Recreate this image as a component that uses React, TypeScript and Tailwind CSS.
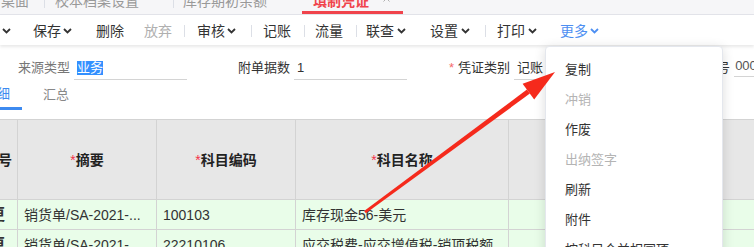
import { X } from 'lucide-react';

// small bold caret used after toolbar labels
function Chev({ className = '' }: { className?: string }) {
  return (
    <svg width="9" height="6" viewBox="0 0 9 6" className={`shrink-0 ${className}`}>
      <path d="M1 1l3.5 3.5L8 1" fill="none" stroke="currentColor" strokeWidth="1.8" />
    </svg>
  );
}

function Sep({ className = '' }: { className?: string }) {
  return <span className={`h-[12px] w-px shrink-0 bg-[#dcdfe6] ${className}`} />;
}

const MENU = [
  { label: '复制', disabled: false },
  { label: '冲销', disabled: true },
  { label: '作废', disabled: false },
  { label: '出纳签字', disabled: true },
  { label: '刷新', disabled: false },
  { label: '附件', disabled: false },
  { label: '按科目合并相同项', disabled: false },
];

export default function App() {
  return (
    <div className="relative h-[247px] w-[754px] overflow-hidden whitespace-nowrap bg-white font-['Liberation_Sans','Noto_Sans_CJK_SC',sans-serif] text-[#333]">
      {/* Page tabs (cut off at the top) */}
      <div className="h-[15px] overflow-hidden border-b border-[#e3e4ea] bg-[#f6f6f8] text-[14px] leading-[14px] text-[#999]">
        <div className="-mt-[6px] flex h-[20px] items-start">
          <span className="ml-[1px]">桌面</span>
          <Sep className="ml-[15px] h-[14px]" />
          <span className="ml-[10px]">校本档案设置</span>
          <Sep className="ml-[34px] h-[14px]" />
          <span className="ml-[9px]">库存期初余额</span>
          <div className="ml-[35px] flex h-[20px] w-[101px] items-start border-b-[3px] border-[#f0444c] pl-[11px]">
            <span className="font-bold text-[#f0444c]">填制凭证</span>
            <X size={11} strokeWidth={2} className="-mt-[1px] ml-[12px] text-[#aaa]" />
          </div>
        </div>
      </div>

      {/* Toolbar */}
      <div className="relative z-10 flex h-[30px] items-center bg-white pt-[2px] text-[14px] leading-[16px] shadow-[0_2px_3px_rgba(0,0,0,0.09)]">
        <Chev className="ml-[2px]" />
        <span className="ml-[22px]">保存</span>
        <Chev className="ml-[2px]" />
        <span className="ml-[24px]">删除</span>
        <span className="ml-[20px] text-[#b0b0b0]">放弃</span>
        <Sep className="ml-[12px]" />
        <span className="ml-[12px]">审核</span>
        <Chev className="ml-[2px]" />
        <Sep className="ml-[15px]" />
        <span className="ml-[11px]">记账</span>
        <Sep className="ml-[13px]" />
        <span className="ml-[10px]">流量</span>
        <Sep className="ml-[13px]" />
        <span className="ml-[9px]">联查</span>
        <Chev className="ml-[3px]" />
        <span className="ml-[24px]">设置</span>
        <Chev className="ml-[3px]" />
        <Sep className="ml-[15px]" />
        <span className="ml-[11px]">打印</span>
        <Chev className="ml-[3px]" />
        <span className="ml-[23px] text-[#4d8ff2]">更多</span>
        <Chev className="ml-[2px] text-[#4d8ff2]" />
      </div>

      {/* Header form */}
      <div className="flex h-[35px] items-end pl-[18px] text-[13px] leading-[16px] [&>*]:shrink-0">
        <span className="flex h-[24px] items-center text-[#777]">来源类型</span>
        <div className="ml-[4px] flex h-[24px] w-[113px] items-center border-b border-[#d4d4d4] pl-[3px]">
          <span className="bg-[#3390ff] leading-[14px] text-white">业务</span>
        </div>
        <span className="ml-[51px] flex h-[24px] items-center">附单据数</span>
        <div className="ml-[4px] flex h-[24px] w-[113px] items-center border-b border-[#d4d4d4] pl-[3px]">1</div>
        <span className="ml-[42px] flex h-[24px] items-center text-[#f56c6c]">*</span>
        <span className="ml-[4px] flex h-[24px] items-center">凭证类别</span>
        <div className="ml-[4px] flex h-[24px] w-[113px] items-center border-b border-[#d4d4d4] pl-[3px]">记账</div>
        <span className="ml-[51px] flex h-[24px] items-center">凭证编号</span>
        <div className="mb-[3px] ml-[4px] flex h-[21px] w-[60px] items-center border-b border-[#d4d4d4] pl-[1px] text-[#555]">
          0001
        </div>
      </div>

      {/* Detail / summary tabs */}
      <div className="flex h-[30px] text-[13px] leading-[16px]">
        <div className="-ml-[16px] flex w-[38px] shrink-0 items-center border-b-[3px] border-[#3d8af0] text-[#3d8af0]">明细</div>
        <div className="ml-[21px] flex items-center text-[#888]">汇总</div>
      </div>

      {/* Voucher grid */}
      <div className="mt-[9px] border-t border-[#d3d3d3] text-[14px] leading-[16px]">
        <div className="flex h-[80px] border-b border-[#d3d3d3] bg-[#e7e7e7] font-bold text-[#222]">
          <div className="flex w-[18px] shrink-0 items-center justify-end overflow-hidden border-r border-[#d3d3d3] pr-[5px]">
            <span className="shrink-0">序号</span>
          </div>
          <div className="flex w-[139px] shrink-0 items-center justify-center border-r border-[#d3d3d3]">
            <span className="font-normal text-[#f5334a]">*</span>摘要
          </div>
          <div className="flex w-[139px] shrink-0 items-center justify-center border-r border-[#d3d3d3]">
            <span className="font-normal text-[#f5334a]">*</span>科目编码
          </div>
          <div className="flex w-[213px] shrink-0 items-center justify-center border-r border-[#d3d3d3]">
            <span className="font-normal text-[#f5334a]">*</span>科目名称
          </div>
          <div className="flex-1" />
        </div>

        {[
          { code: '100103', summary: '销货单/SA-2021-...', name: '库存现金56-美元' },
          { code: '22210106', summary: '销货单/SA-2021-', name: '应交税费-应交增值税-销项税额' },
        ].map((r) => (
          <div key={r.code} className="flex h-[30px] border-b border-[#d3d3d3] bg-[#e9fde9]">
            <div className="flex w-[18px] shrink-0 items-center justify-end overflow-hidden border-r border-[#d3d3d3] pr-[12px]">
              <span className="shrink-0 text-[16px] font-bold">更</span>
            </div>
            <div className="flex w-[139px] shrink-0 items-center overflow-hidden border-r border-[#d3d3d3] pl-[6px]">
              {r.summary}
            </div>
            <div className="flex w-[139px] shrink-0 items-center border-r border-[#d3d3d3] pl-[6px]">{r.code}</div>
            <div className="flex w-[213px] shrink-0 items-center overflow-hidden border-r border-[#d3d3d3] pl-[6px]">
              {r.name}
            </div>
            <div className="flex-1" />
          </div>
        ))}
      </div>

      {/* "更多" dropdown */}
      <div className="absolute left-[545px] top-[46px] z-20 h-[230px] w-[178px] rounded-[4px] border border-[#e4e7ed] bg-white pt-[8px] text-[13px] leading-[16px] shadow-[0_2px_12px_rgba(0,0,0,0.14)]">
        {MENU.map((m) => (
          <div
            key={m.label}
            className={`flex h-[30px] items-center pl-[19px] ${m.disabled ? 'text-[#b4b4b4]' : 'text-[#333]'}`}
          >
            {m.label}
          </div>
        ))}
      </div>

      {/* Annotation arrow */}
      <svg className="pointer-events-none absolute inset-0 z-30" width="754" height="247" viewBox="0 0 754 247">
        <polygon points="364.1,211 365.9,213.2 529.9,93.6 526.9,89.6" fill="#f52a1c" />
        <polygon points="555,72 522.6,83.8 534.2,99.4" fill="#f52a1c" />
      </svg>
    </div>
  );
}
